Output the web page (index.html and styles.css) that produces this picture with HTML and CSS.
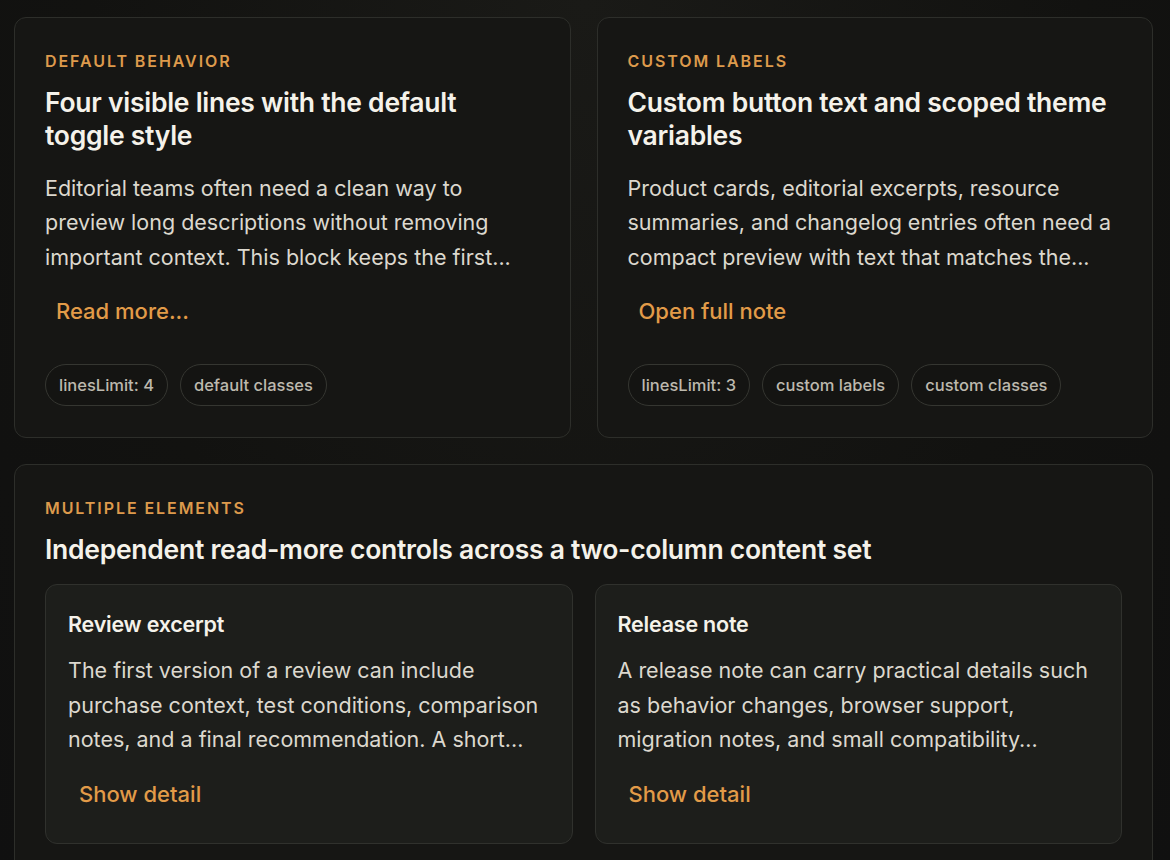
FILE: index.html
```html
<!DOCTYPE html>
<html lang="en">
<head>
<meta charset="utf-8">
<title>Read more demos</title>
<link rel="stylesheet" href="styles.css">
</head>
<body>
<main class="page">
  <section class="grid">
    <article class="card">
      <p class="eyebrow">Default behavior</p>
      <h2 class="title">Four visible lines with the default toggle style</h2>
      <p class="body">Editorial teams often need a clean way to preview long descriptions without removing important context. This block keeps the first...</p>
      <button class="toggle">Read more...</button>
      <div class="tags">
        <span class="tag">linesLimit: 4</span>
        <span class="tag">default classes</span>
      </div>
    </article>
    <article class="card">
      <p class="eyebrow">Custom labels</p>
      <h2 class="title">Custom button text and scoped theme variables</h2>
      <p class="body">Product cards, editorial excerpts, resource summaries, and changelog entries often need a compact preview with text that matches the...</p>
      <button class="toggle">Open full note</button>
      <div class="tags">
        <span class="tag">linesLimit: 3</span>
        <span class="tag">custom labels</span>
        <span class="tag">custom classes</span>
      </div>
    </article>
  </section>
  <section class="card wide">
    <p class="eyebrow">Multiple elements</p>
    <h2 class="title">Independent read-more controls across a two-column content set</h2>
    <div class="inner-grid">
      <div class="inner">
        <h3 class="inner-title">Review excerpt</h3>
        <p class="body">The first version of a review can include purchase context, test conditions, comparison notes, and a final recommendation. A short...</p>
        <button class="toggle">Show detail</button>
      </div>
      <div class="inner">
        <h3 class="inner-title">Release note</h3>
        <p class="body">A release note can carry practical details such as behavior changes, browser support, migration notes, and small compatibility...</p>
        <button class="toggle">Show detail</button>
      </div>
    </div>
  </section>
</main>
</body>
</html>
```
FILE: styles.css
```css
* { box-sizing: border-box; }
html, body { margin: 0; padding: 0; }
body {
  background: radial-gradient(ellipse at 50% 0%, #1a1a17 0%, #121210 60%, #101010 100%);
  background-color: #111110;
  font-family: Inter, "Noto Sans", sans-serif;
  color: #f2efe7;
  min-height: 860px;
  overflow: hidden;
}
.page {
  padding: 17px 17px 0 14px;
  display: flex;
  flex-direction: column;
  gap: 26px;
}
.grid {
  display: grid;
  grid-template-columns: 1fr 1fr;
  gap: 26px;
}
.card {
  background: #161614;
  border: 1px solid #2d2e2a;
  border-radius: 12px;
  padding: 31px 30px 31px 30px;
  display: flex;
  flex-direction: column;
}
.eyebrow {
  margin: 0;
  font-size: 16px;
  line-height: 24px;
  font-weight: 600;
  letter-spacing: 0.12em;
  text-transform: uppercase;
  color: #dd9a4c;
}
.title {
  margin: 12.5px 0 0;
  font-size: 26.5px;
  line-height: 33px;
  font-weight: 600;
  letter-spacing: -0.01em;
  color: #f5f2ea;
}
.body {
  margin: 19px 0 0;
  font-size: 21.5px;
  line-height: 34.5px;
  font-weight: 400;
  color: #dcd8ce;
}
.toggle {
  align-self: flex-start;
  margin-top: 15px;
  padding: 8px 11px;
  background: transparent;
  border: 0;
  font-family: inherit;
  font-size: 22px;
  line-height: 28px;
  font-weight: 500;
  color: #e29b48;
  cursor: pointer;
}
.tags {
  display: flex;
  gap: 12px;
  margin-top: auto;
  padding-top: 31px;
}
.tag {
  height: 42px;
  display: inline-flex;
  align-items: center;
  padding: 0 13px;
  border: 1px solid #353631;
  border-radius: 21px;
  font-size: 16.5px;
  font-weight: 500;
  color: #bdb9ae;
  background: #141412;
}
.inner-grid {
  display: grid;
  grid-template-columns: 1fr 1fr;
  gap: 22px;
  margin-top: 18.5px;
}
.inner {
  background: #1d1e1b;
  border: 1px solid #30312d;
  border-radius: 12px;
  padding: 25px 22px 27px 22px;
  display: flex;
  flex-direction: column;
}
.inner-title {
  margin: 0;
  font-size: 21.5px;
  line-height: 28px;
  font-weight: 600;
  letter-spacing: -0.01em;
  color: #f5f2ea;
}
.inner .body { margin-top: 15px; }
```
